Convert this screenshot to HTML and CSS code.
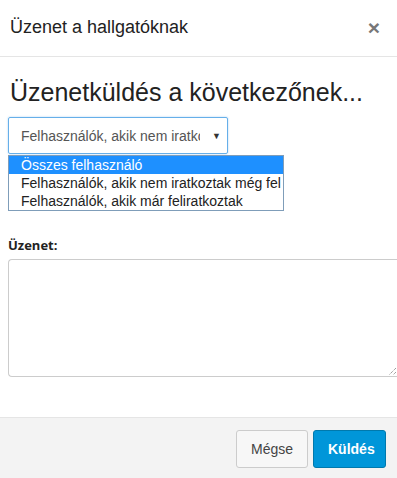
FILE: index.html
```html
<!DOCTYPE html>
<html lang="hu">
<head>
<meta charset="utf-8">
<link rel="stylesheet" href="styles.css">
</head>
<body>
<div class="modal">
  <div class="modal-header">
    <div class="modal-title">Üzenet a hallgatóknak</div>
    <div class="close">×</div>
  </div>
  <div class="modal-body">
    <h2 class="heading">Üzenetküldés a következőnek...</h2>
    <div class="select-wrap">
      <div class="select">
        <span class="select-text">Felhasználók, akik nem iratkoztak még fel</span>
        <span class="arrow">▼</span>
      </div>
      <ul class="options">
        <li class="option selected">Összes felhasználó</li>
        <li class="option">Felhasználók, akik nem iratkoztak még fel</li>
        <li class="option">Felhasználók, akik már feliratkoztak</li>
      </ul>
    </div>
    <label class="label">Üzenet:</label>
    <div class="textarea">
      <svg class="grip" width="10" height="10" viewBox="0 0 10 10">
        <path d="M9 2 L2 9 M9 6 L6 9" stroke="#777" stroke-width="1" stroke-dasharray="1 1" fill="none"/>
      </svg>
    </div>
  </div>
  <div class="modal-footer">
    <button class="btn btn-default">Mégse</button>
    <button class="btn btn-primary">Küldés</button>
  </div>
</div>
</body>
</html>
```
FILE: styles.css
```css
* { box-sizing: border-box; }
html, body { margin: 0; padding: 0; }
body {
  width: 397px;
  height: 478px;
  overflow: hidden;
  font-family: "Liberation Sans", Arial, sans-serif;
  color: #333;
  background: #fff;
}
.modal {
  display: flex;
  flex-direction: column;
  height: 478px;
}
.modal-header {
  height: 57px;
  border-bottom: 1px solid #e5e5e5;
  display: flex;
  align-items: center;
  justify-content: space-between;
  padding: 0 17px 0 10px;
}
.modal-title {
  font-size: 18px;
  color: #222;
  padding-bottom: 2px;
}
.close {
  font-size: 21px;
  font-weight: bold;
  color: #777;
  line-height: 1;
  padding-bottom: 2px;
}
.modal-body {
  flex: 1;
  padding: 0 0 0 8px;
}
.heading {
  margin: 20px 0 0 2px;
  font-size: 25px;
  font-weight: normal;
  color: #222;
  line-height: 30px;
}
.select-wrap {
  position: relative;
  margin-top: 10px;
  width: 220px;
}
.select {
  height: 37px;
  border: 1px solid #66afe9;
  border-radius: 2px;
  display: flex;
  align-items: center;
  padding: 0 6px 0 12px;
  box-shadow: 0 0 2px rgba(102,175,233,0.6);
}
.select-text {
  width: 182px;
  font-size: 14px;
  color: #555;
  white-space: nowrap;
  overflow: hidden;
}
.arrow {
  font-size: 9px;
  color: #333;
  margin-left: 12px;
}
.options {
  position: absolute;
  left: 0;
  top: 38px;
  width: 276px;
  margin: 0;
  padding: 0;
  list-style: none;
  background: #fff;
  border: 1px solid #7f9db9;
  z-index: 2;
}
.option {
  height: 18px;
  line-height: 18px;
  font-size: 14px;
  padding-left: 12px;
  color: #222;
  white-space: nowrap;
  overflow: hidden;
}
.option.selected {
  background: #1e90ff;
  color: #fff;
}
.label {
  display: block;
  margin-top: 83px;
  font-family: "Open Sans", sans-serif;
  font-weight: bold;
  font-size: 13px;
  color: #222;
  line-height: 17px;
}
.textarea {
  position: relative;
  margin-top: 5px;
  height: 118px;
  border: 1px solid #ccc;
  border-right: none;
  border-radius: 4px 0 0 4px;
}
.grip {
  position: absolute;
  right: 0;
  bottom: 0;
}
.modal-footer {
  height: 61px;
  border-top: 1px solid #e5e5e5;
  background: #f3f3f3;
  display: flex;
  justify-content: flex-end;
  align-items: flex-start;
  gap: 5px;
  padding: 12px 11px 0 0;
}
.btn {
  height: 38px;
  font-family: "Liberation Sans", Arial, sans-serif;
  font-size: 14px;
  border-radius: 3px;
  padding: 0 14px;
  cursor: pointer;
}
.btn-default {
  width: 72px;
  background: #f7f7f7;
  border: 1px solid #ccc;
  color: #444;
}
.btn-primary {
  width: 73px;
  background: #0096d9;
  border: 1px solid #0079ad;
  color: #fff;
  font-weight: bold;
}
```
